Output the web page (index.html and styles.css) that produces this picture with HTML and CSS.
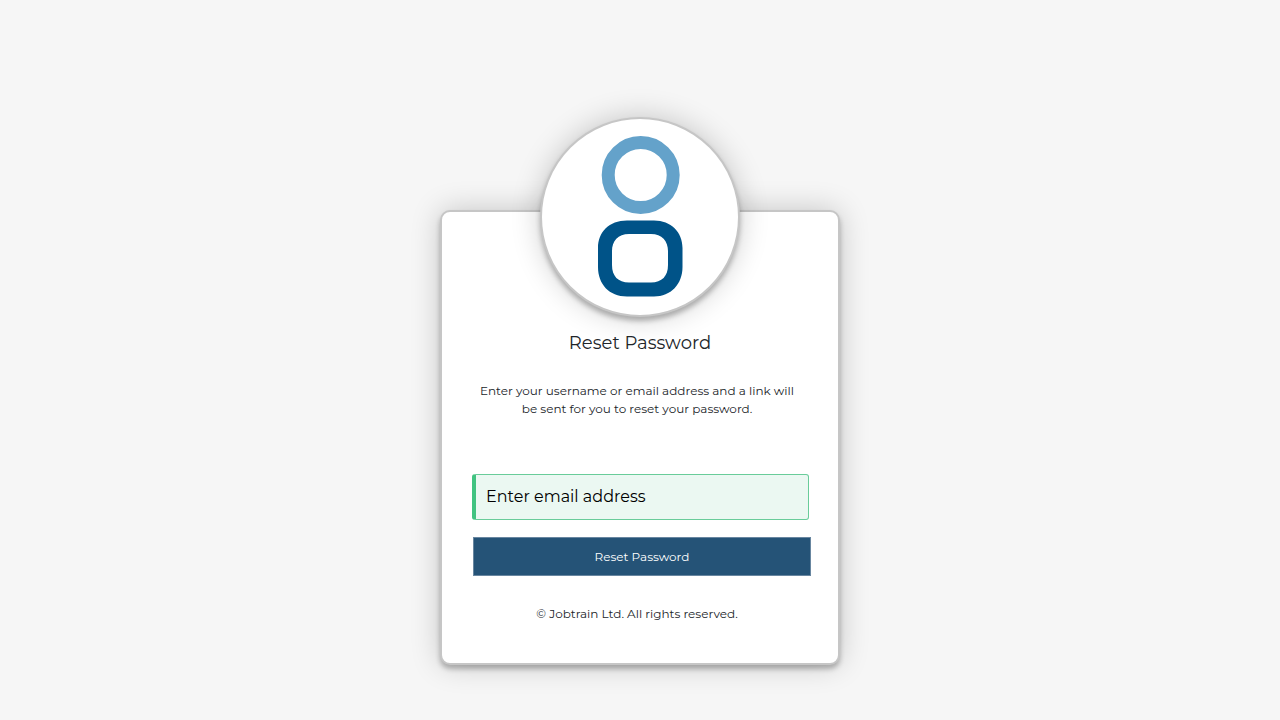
FILE: index.html
```html
<!DOCTYPE html>
<html lang="en">
<head>
<meta charset="utf-8">
<meta name="viewport" content="width=device-width, initial-scale=1">
<title>Reset Password</title>
<link rel="stylesheet" href="styles.css">
</head>
<body>
<main class="card">
  <div class="logo">
    <svg class="logo-mark" viewBox="0 0 86 164" role="img" aria-label="Jobtrain">
      <circle cx="43.7" cy="40" r="32.5" fill="none" stroke="#64a2ca" stroke-width="13"/>
      <path fill="#005388" fill-rule="evenodd" d="M30 85.500H57C74 85.500 85.500 97 85.500 113V132C85.500 149 74 161.500 57 161.500H30C12 161.500 1 149 1 132V113C1 97 12 85.500 30 85.500ZM32 99C21 99 15 106 15 116V130C15 141 21 147.500 32 147.500H54C65 147.500 71 141 71 130V116C71 106 65 99 54 99Z"/>
    </svg>
  </div>
  <h1 class="title">Reset Password</h1>
  <p class="intro">Enter your username or email address and a link will<br>be sent for you to reset your password.</p>
  <form class="form">
    <input class="email" type="email" placeholder="Enter email address" aria-label="Enter email address">
    <button class="submit" type="submit">Reset Password</button>
  </form>
  <p class="copyright">© Jobtrain Ltd. All rights reserved.</p>
</main>
</body>
</html>
```
FILE: styles.css
```css
* {
  box-sizing: border-box;
}

body {
  margin: 0;
  padding: 210px 16px 56px;
  background: #f6f6f6;
  color: #212529;
  font-family: Montserrat, Inter, "Open Sans", sans-serif;
  font-weight: 400;
}

.card,
.logo {
  border: 2px solid #c6c6c6;
  background: #fff;
  box-shadow: 0 4px 5px rgba(0, 0, 0, 0.25), 0 0 30px rgba(0, 0, 0, 0.2);
}

.card {
  display: flex;
  flex-direction: column;
  align-items: center;
  max-width: 400px;
  margin: 0 auto;
  padding: 0 27px 40px;
  border-radius: 10px;
}

.logo {
  display: flex;
  align-items: center;
  justify-content: center;
  width: 200px;
  height: 200px;
  margin-top: -95px;
  border-radius: 50%;
}

.logo-mark {
  width: 86px;
  height: 164px;
}

.title {
  margin: 14px 0 0;
  font-size: 18px;
  font-weight: 400;
  line-height: 24px;
}

.intro {
  margin: 27px 6px 0 0;
  font-size: 12px;
  line-height: 18px;
  text-align: center;
}

.form {
  display: flex;
  flex-direction: column;
  gap: 17px;
  width: 100%;
  margin-top: 56px;
  padding-left: 3px;
}

.email {
  width: calc(100% - 2px);
  height: 46px;
  padding: 0 10px 2px;
  border: 1px solid #69cc9a;
  border-left: 4px solid #41c381;
  border-radius: 3px;
  background: #ebf8f2;
  font: 400 16px/24px Montserrat, Inter, "Open Sans", sans-serif;
}

.email::placeholder {
  color: #000;
  opacity: 1;
}

.submit {
  height: 39px;
  margin-left: 1px;
  padding: 0;
  border: 1px solid #6886a0;
  background: #255377;
  color: #fff;
  font: 400 12px/18px Montserrat, Inter, "Open Sans", sans-serif;
}

.copyright {
  margin: 29px 6px 0 0;
  font-size: 12px;
  line-height: 18px;
}
```
